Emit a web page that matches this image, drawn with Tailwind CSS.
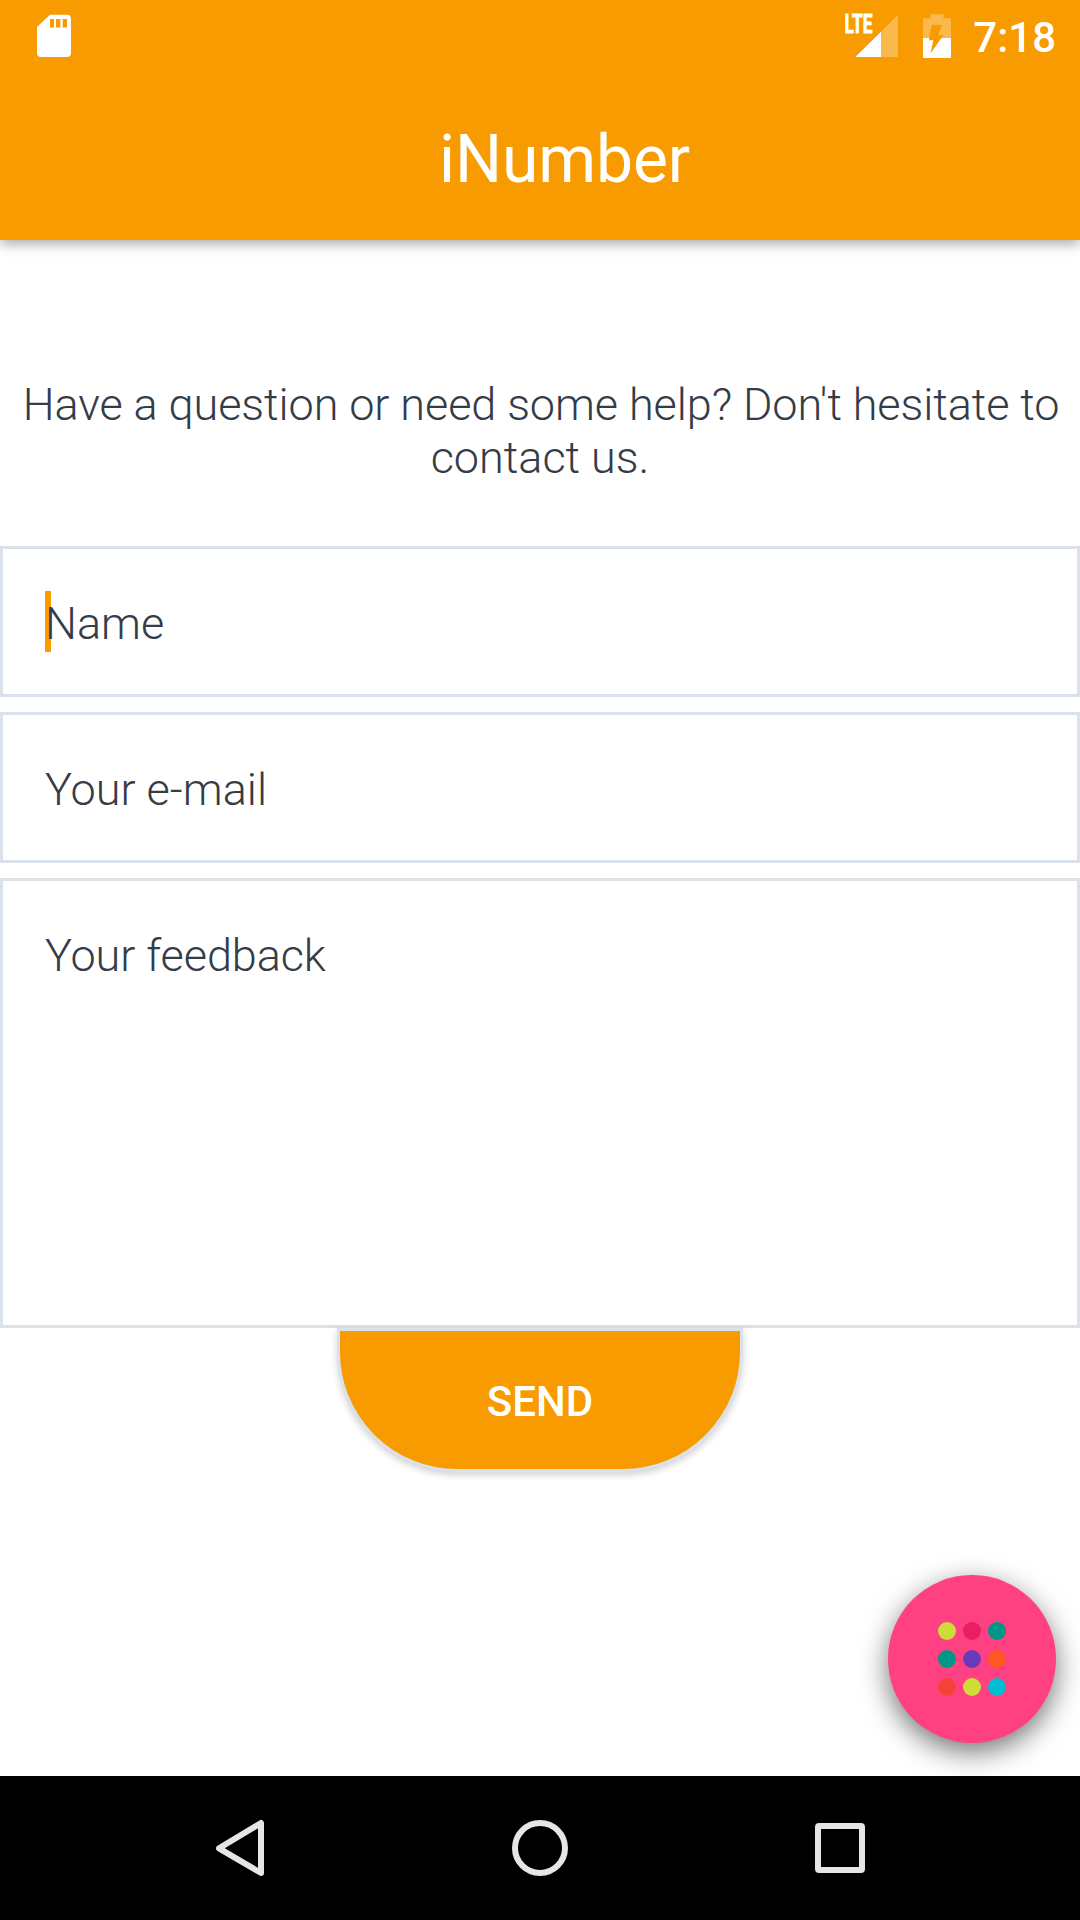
<!DOCTYPE html>
<html lang="en">
<head>
<meta charset="utf-8">
<title>iNumber</title>
<script src="https://cdn.jsdelivr.net/npm/@tailwindcss/browser@4"></script>
</head>
<body class="bg-white">
<div class="relative flex h-[1920px] w-[1080px] flex-col overflow-hidden bg-white font-['Roboto',sans-serif] text-[#343c48]">
  <header class="flex h-[240px] shrink-0 flex-col bg-[#f89b00] text-white shadow-[0_4px_12px_rgba(0,0,0,0.34)]">
    <div class="flex h-[72px] items-center justify-between pr-[24px] pl-[37px]">
      <svg class="h-[72px] w-[34px]" viewBox="37 0 34 72"><path fill="#fff" fill-rule="evenodd" d="M50 14.700H67a4 4 0 0 1 4 4V53a4 4 0 0 1-4 4H41a4 4 0 0 1-4-4V27ZM50 19v8.500h4V19ZM56 19v8.500h4.300V19ZM62.700 19v8.500H67V19Z"/></svg>
      <div class="flex items-center">
        <svg class="h-[72px] w-[53px]" viewBox="845 0 53 72">
          <path fill="#fff" fill-opacity=".3" d="M898 14.700V57H881V31.700Z"/>
          <path fill="#fff" d="M881 31.700V57H855.300Z"/>
          <text x="844.500" y="33.300" font-size="25.500" font-weight="700" fill="#fff" stroke="#fff" stroke-width=".8" textLength="28" lengthAdjust="spacingAndGlyphs">LTE</text>
        </svg>
        <svg class="ml-[25px] h-[72px] w-[28px]" viewBox="923 0 28 72">
          <path fill="#fff" fill-opacity=".3" fill-rule="evenodd" d="M930.500 14.300H943.500V18.300H951V38H941.500L943.500 35.300H938L942 24.700H932L929 38H923V18.300H930.500Z"/>
          <path fill="#fff" d="M923 38H929.300L928.800 40.300H933.300L930.500 53.500L941.500 38H951V58H923Z"/>
        </svg>
        <span class="ml-[22px] pt-[3px] text-[42px] leading-[72px] font-medium">7:18</span>
      </div>
    </div>
    <h1 class="pt-[2px] pl-[439px] text-[66px] leading-[172px] font-normal tracking-[-0.1px]">iNumber</h1>
  </header>
  <main class="flex h-[1536px] shrink-0 flex-col">
    <p class="mt-[138px] h-[168px] text-center text-[45px] leading-[53px] font-light"><span class="pl-[2px] tracking-[-0.08px]">Have a question or need some help? Don't hesitate to</span><br>contact us.</p>
    <div class="flex flex-col gap-[15px] text-[45px] leading-[53px] font-light">
      <div class="flex h-[151px] border-3 border-[#dae1ea] pt-[42px] pl-[42px]"><span class="h-[61px] w-[6px] shrink-0 bg-[#f89b00]"></span><span class="relative -ml-[6px] pt-[6px]">Name</span></div>
      <div class="h-[151px] border-3 border-[#dae1ea] pt-[48px] pl-[42px]">Your e-mail</div>
      <div class="h-[450px] border-3 border-[#dae1ea] pt-[48px] pl-[42px] tracking-[-0.08px]">Your feedback</div>
    </div>
    <div class="flex justify-center">
      <div class="h-[144px] w-[406px] rounded-b-[120px] border-3 border-[#dae1ea] bg-[#f89b00] text-center text-[42px] leading-[142px] font-medium text-white shadow-[0_3px_7px_rgba(0,0,0,0.18)]">SEND</div>
    </div>
  </main>
  <nav class="h-[144px] shrink-0 bg-black">
    <svg class="h-[144px] w-[1080px]" viewBox="0 1776 1080 144" fill="none" stroke="#e6e6e6" stroke-width="6" stroke-linejoin="round">
      <path d="M261 1823V1873L219 1848.300Z"/>
      <circle cx="540" cy="1848" r="25"/>
      <rect x="818" y="1826" width="44" height="44" rx="1"/>
    </svg>
  </nav>
  <div class="absolute top-[1575px] left-[888px] size-[168px] rounded-full bg-[#ff4081] shadow-[0_9px_28px_rgba(0,0,0,0.55)]">
    <svg class="size-full" viewBox="0 0 168 168">
      <circle cx="59" cy="56" r="9" fill="#cddc39"/><circle cx="84" cy="56" r="9" fill="#e91e63"/><circle cx="109" cy="56" r="9" fill="#009688"/>
      <circle cx="59" cy="84" r="9" fill="#009688"/><circle cx="84" cy="84" r="9" fill="#673ab7"/><circle cx="109" cy="84" r="9" fill="#ff5722"/>
      <circle cx="59" cy="112" r="9" fill="#f44336"/><circle cx="84" cy="112" r="9" fill="#cddc39"/><circle cx="109" cy="112" r="9" fill="#00bcd4"/>
    </svg>
  </div>
</div>
</body>
</html>
